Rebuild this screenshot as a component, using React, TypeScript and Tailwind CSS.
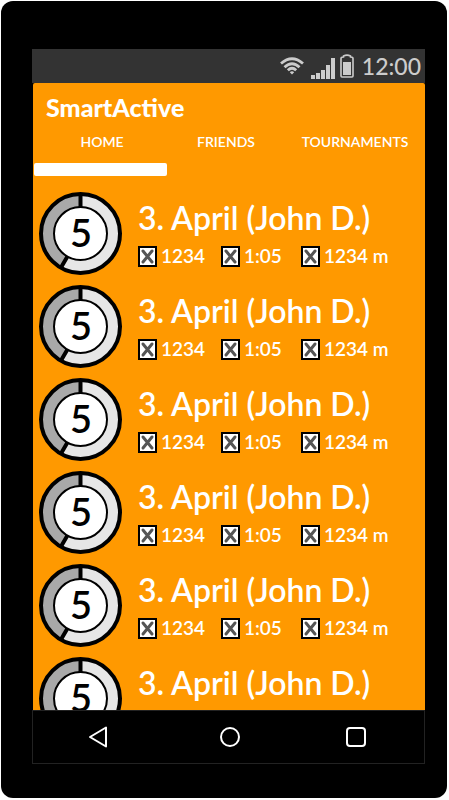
import React from "react";

type Stats = { steps: string; time: string; distance: string };
type Activity = { id: number; score: number; title: string; stats?: Stats };

const title = "3. April (John D.)";
const stats: Stats = { steps: "1234", time: "1:05", distance: "1234 m" };

const activities: Activity[] = [
  { id: 1, score: 5, title, stats },
  { id: 2, score: 5, title, stats },
  { id: 3, score: 5, title, stats },
  { id: 4, score: 5, title, stats },
  { id: 5, score: 5, title, stats },
  { id: 6, score: 5, title },
];

function WifiIcon() {
  return (
    <svg width="24" height="18" viewBox="0 0 24 18" fill="none" stroke="#cccccc" strokeWidth="2.8" aria-hidden="true">
      <path d="M1 6.500Q12-3 23 6.500" />
      <path d="M4.500 10.200Q12 3.200 19.500 10.200" />
      <path d="M7.800 13.200Q12 9.200 16.200 13.200" />
      <path d="M9.800 15.200Q12 13.200 14.200 15.200L12 17.600Z" fill="#cccccc" stroke="none" />
    </svg>
  );
}

function SignalIcon() {
  return (
    <svg width="25" height="21" viewBox="0 0 25 21" fill="#cccccc" aria-hidden="true">
      <rect x="0" y="17" width="4" height="4" />
      <rect x="5" y="15" width="4" height="6" />
      <rect x="10" y="12" width="4" height="9" />
      <rect x="15" y="7" width="4" height="14" />
      <rect x="20" y="0" width="4" height="21" />
    </svg>
  );
}

function BatteryIcon() {
  return (
    <svg width="14" height="24" viewBox="0 0 14 24" fill="none" aria-hidden="true">
      <path d="M1 4.500Q1 3 3.500 3V2Q7 .2 10.500 2V3Q13 3 13 4.500V22Q13 23 12 23H2Q1 23 1 22Z" stroke="#cccccc" strokeWidth="1.6" />
      <rect x="3" y="8" width="8" height="13" fill="#cccccc" />
    </svg>
  );
}

function CrossBox() {
  return (
    <svg className="shrink-0" width="19" height="21" viewBox="0 0 19 21" aria-hidden="true">
      <rect x="1" y="1" width="17" height="19" fill="#fff" stroke="#000" strokeWidth="2" />
      <path d="M5 5L14 16M14 5L5 16" stroke="#555" strokeWidth="3" strokeLinecap="round" />
    </svg>
  );
}

function ScoreRing({ score }: { score: number }) {
  return (
    <div className="grid shrink-0 place-items-center">
      <svg className="col-start-1 row-start-1" width="84" height="84" viewBox="0 0 84 84" aria-hidden="true">
        <circle cx="41.500" cy="41.500" r="39.500" fill="#e6e6e6" />
        <path d="M41.500 41.500V2A39.500 39.500 0 0 0 22 75.800Z" fill="#a9a9a9" />
        <path d="M41.500 2V16M29 63.500L22 75.500" stroke="#000" strokeWidth="4" />
        <circle cx="41.500" cy="41.500" r="39.500" fill="none" stroke="#000" strokeWidth="4" />
        <circle cx="41.500" cy="41.500" r="26.500" fill="#fff" stroke="#000" strokeWidth="2" />
      </svg>
      <span className="col-start-1 row-start-1 pb-1 text-[38px] leading-10 font-semibold text-black">{score}</span>
    </div>
  );
}

function ActivityRow({ item }: { item: Activity }) {
  return (
    <li className="flex h-[93px] shrink-0 items-start gap-[15px] pl-[6px]">
      <ScoreRing score={item.score} />
      <div className="min-w-0 flex-1 pt-[3px]">
        <h2 className="text-[32px] leading-[46px] font-semibold whitespace-nowrap">{item.title}</h2>
        {item.stats && (
          <div className="flex items-center pt-1 text-[19px] leading-[22px] font-semibold whitespace-nowrap">
            <span className="flex w-[83px] items-center gap-1"><CrossBox />{item.stats.steps}</span>
            <span className="flex w-20 items-center gap-1"><CrossBox />{item.stats.time}</span>
            <span className="flex items-center gap-1"><CrossBox />{item.stats.distance}</span>
          </div>
        )}
      </div>
    </li>
  );
}

export default function App() {
  return (
    <div className="h-screen bg-white pt-px pr-0.5 pb-0.5 pl-px font-['Lato','Liberation_Sans',sans-serif] text-white">
      <div className="flex h-full flex-col rounded-xl bg-black pt-12 pr-[22px] pb-[34px] pl-[31px]">
        <header className="flex h-[34px] shrink-0 items-center justify-end bg-[#333333] pr-1 text-[#cccccc]">
          <WifiIcon />
          <span className="pt-1 pl-[7px]"><SignalIcon /></span>
          <span className="pl-1"><BatteryIcon /></span>
          <time className="pl-2 text-[23px] leading-8 font-medium">12:00</time>
        </header>
        <main className="ml-px flex min-h-0 flex-1 flex-col overflow-hidden rounded-t-xs bg-[#ff9900]">
          <h1 className="shrink-0 pt-2 pl-[13px] text-[25px] leading-8 font-black">SmartActive</h1>
          <nav className="grid h-[38px] shrink-0 grid-cols-[138fr_110fr_144fr] pb-0.5 text-[14px] font-semibold">
            <button type="button">HOME</button>
            <button type="button">FRIENDS</button>
            <button type="button" className="pl-1">TOURNAMENTS</button>
          </nav>
          <div className="mt-0.5 ml-px h-[13px] w-[34%] shrink-0 rounded-xs bg-white" />
          <ul className="mt-4 min-h-0 flex-1 overflow-hidden">
            {activities.map((item) => <ActivityRow key={item.id} item={item} />)}
          </ul>
        </main>
        <nav className="grid h-[54px] shrink-0 grid-cols-[131fr_134fr_128fr] place-items-center border border-[#222]">
          <button type="button" aria-label="Back">
            <svg width="20" height="22" viewBox="0 0 20 22" fill="none" stroke="#fff" strokeWidth="2" strokeLinejoin="round"><path d="M18 1.500V20.500L2 11Z" /></svg>
          </button>
          <button type="button" aria-label="Home">
            <svg width="22" height="22" viewBox="0 0 22 22" fill="none" stroke="#fff" strokeWidth="2"><circle cx="11" cy="11" r="9" /></svg>
          </button>
          <button type="button" aria-label="Recent apps" className="pr-2">
            <svg width="20" height="20" viewBox="0 0 20 20" fill="none" stroke="#fff" strokeWidth="2"><rect x="1" y="1" width="18" height="18" rx="3" /></svg>
          </button>
        </nav>
      </div>
    </div>
  );
}
